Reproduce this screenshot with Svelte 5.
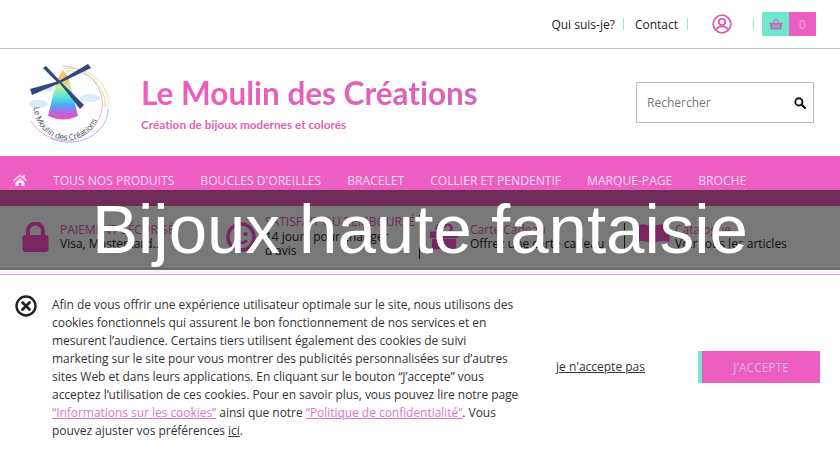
<script>
	const navItems = ["Tous nos produits", "Boucles d'oreilles", "Bracelet", "Collier et pendentif", "Marque-page", "Broche"];
</script>

<div class="page">
	<div class="topbar">
		<a class="toplink">Qui suis-je?</a>
		<span class="sep"></span>
		<a class="toplink contact">Contact</a>
		<span class="sep second"></span>
		<svg class="user" viewBox="0 0 20 20" width="20" height="20">
			<circle cx="10" cy="10" r="8.800" fill="none" stroke="#d860b0" stroke-width="1.800" />
			<circle cx="10" cy="8" r="3.200" fill="none" stroke="#d860b0" stroke-width="1.800" />
			<path d="M4.200 15.500c1.200-2.300 3.400-3.200 5.800-3.200s4.600.9 5.800 3.200" fill="none" stroke="#d860b0" stroke-width="1.800" />
		</svg>
		<span class="sep"></span>
		<div class="cart">
			<span class="basket">
				<svg viewBox="0 0 16 14" width="14" height="12">
					<path d="M0 5.500h16v1.600h-.8L14 13.500H2L.8 7.100H0z M4 5.500 7 .6l1 .6-2.600 4.300z M12 5.500 9 .6l-1 .6 2.600 4.300z" fill="#c06fb5" />
					<path d="M5 8v3.800M8 8v3.800M11 8v3.800" stroke="#6ee8cc" stroke-width="1.100" />
				</svg>
			</span>
			<span class="count">0</span>
		</div>
	</div>

	<header class="header">
		<svg class="logo" viewBox="0 0 90 84" width="90" height="84">
			<defs>
				<linearGradient id="rainbow" x1="0" y1="0" x2="0" y2="1">
					<stop offset="0" stop-color="#f7bf70" />
					<stop offset="0.22" stop-color="#b8f0a0" />
					<stop offset="0.45" stop-color="#58e4dc" />
					<stop offset="0.65" stop-color="#4aa8f4" />
					<stop offset="0.82" stop-color="#b468e4" />
					<stop offset="1" stop-color="#f052a8" />
				</linearGradient>
			</defs>
			<g fill="none" stroke-width="0.7">
				<path d="M36 3A42 38 0 0 1 44 78A42 38 0 0 1 5 58" stroke="#e88cc4" />
				<path d="M38 5.500A39 35 0 0 1 82 44" stroke="#f0c860" />
				<path d="M40 8A36 33 0 0 1 79 44" stroke="#a4e47c" />
				<path d="M82 46A39 33 0 0 1 24 75" stroke="#8098ec" />
			</g>
			<path d="M37 7 43 16H31z" fill="#f7bf70" />
			<path d="M31 16H43L52 53Q37 60 22 53z" fill="url(#rainbow)" />
			<ellipse cx="12" cy="41" rx="10" ry="4" fill="#d8ecfa" />
			<ellipse cx="64" cy="35" rx="10" ry="4" fill="#d8ecfa" />
			<ellipse cx="24" cy="26" rx="6" ry="2.500" fill="#d8ecfa" />
			<path d="M33 18 4 26 6 32 34 20z" fill="#2f4880" />
			<path d="M33 18 62 1 65 5 34 20z" fill="#2f4880" />
			<path d="M17 5 20 3 34 18 32 20z" fill="#2f4880" />
			<path d="M32 18 34 18 58 42 54 46z" fill="#2f4880" />
			<path id="arc" d="M8 44A33 33 0 0 0 73 52" fill="none" />
			<text class="logotext"><textPath href="#arc">Le Moulin des Créations</textPath></text>
		</svg>
		<div class="brand">
			<div class="name">Le Moulin des Créations</div>
			<div class="tagline">Création de bijoux modernes et colorés</div>
		</div>
		<div class="search">
			<span class="placeholder">Rechercher</span>
			<svg viewBox="0 0 14 14" width="12" height="12">
				<circle cx="5.700" cy="5.700" r="4.200" fill="none" stroke="#111" stroke-width="2.200" />
				<path d="M8.800 8.800 12.800 12.800" stroke="#111" stroke-width="2.600" stroke-linecap="round" />
			</svg>
		</div>
	</header>

	<nav class="nav">
		<svg class="home" viewBox="0 0 16 14" width="14" height="12">
			<path d="M8 .5 0 7.400l1 1.200L8 2.600l7 6 1-1.200-2.700-2.300V1.200h-2v2.200zM2.800 9.200V14h3.600v-3.500h3.200V14h3.600V9.200L8 4.600z" fill="#fbe6f5" />
		</svg>
		{#each navItems as item}
			<a class="navitem">{item}</a>
		{/each}
	</nav>

	<section class="features">
		<div class="feature first">
			<svg class="ficon" viewBox="0 0 27 30" width="27" height="30">
				<path d="M6 14V9a7.500 7.500 0 0 1 15 0v5" fill="none" stroke="#ff50d0" stroke-width="4" />
				<rect x="0.500" y="13" width="26" height="17" rx="3" fill="#ff50d0" />
			</svg>
			<div class="ftext">
				<div class="ftitle">PAIEMENT SÉCURISÉ</div>
				<div class="fsub">Visa, Mastercard..</div>
			</div>
		</div>
		<div class="feature sat">
			<svg class="ficon" viewBox="0 0 30 30" width="30" height="30">
				<circle cx="15" cy="15" r="13" fill="none" stroke="#ff50d0" stroke-width="3.500" />
				<circle cx="10.500" cy="12" r="2" fill="#ff50d0" />
				<circle cx="19.500" cy="12" r="2" fill="#ff50d0" />
				<path d="M9 18.500q6 5 12 0" fill="none" stroke="#ff50d0" stroke-width="2.500" />
			</svg>
			<div class="ftext">
				<div class="ftitle">SATISFAIT OU REMBOURSÉ</div>
				<div class="fsub">14 jours pour changer d'avis</div>
			</div>
		</div>
		<div class="feature gift">
			<svg class="ficon" viewBox="0 0 30 26" width="28" height="26">
				<path d="M9 7a4 4 0 1 1 6-4 4 4 0 1 1 6 4" fill="none" stroke="#ff50d0" stroke-width="3" />
				<rect x="0" y="7" width="30" height="7" rx="1" fill="#ff50d0" />
				<rect x="2" y="15" width="26" height="11" rx="1" fill="#ff50d0" />
			</svg>
			<div class="ftext">
				<div class="ftitle">Carte Cadeau</div>
				<div class="fsub">Offrez une carte cadeau</div>
			</div>
		</div>
		<div class="feature book">
			<svg class="ficon raised" viewBox="0 0 34 20" width="35" height="20">
				<path d="M0 2q9-4 17 1 8-5 17-1v16q-9-3-17 2-8-5-17-2z" fill="#ff50d0" />
			</svg>
			<div class="ftext">
				<div class="ftitle">Catalogue</div>
				<div class="fsub">Voir tous les articles</div>
			</div>
		</div>
	</section>

	<div class="strip"></div>

	<section class="cookies">
		<svg class="close" viewBox="0 0 22 22" width="22" height="22">
			<circle cx="11" cy="11" r="9.500" fill="none" stroke="#222" stroke-width="2.400" />
			<path d="M7.500 7.500 14.500 14.500M14.500 7.500 7.500 14.500" stroke="#222" stroke-width="2.800" stroke-linecap="round" />
		</svg>
		<p class="notice">
			Afin de vous offrir une expérience utilisateur optimale sur le site, nous utilisons des cookies fonctionnels qui assurent le bon fonctionnement de nos services et en mesurent l’audience. Certains tiers utilisent également des cookies de suivi marketing sur le site pour vous montrer des publicités personnalisées sur d’autres sites Web et dans leurs applications. En cliquant sur le bouton “J’accepte” vous acceptez l’utilisation de ces cookies. Pour en savoir plus, vous pouvez lire notre page
			<a class="pink">“Informations sur les cookies”</a> ainsi que notre <a class="pink">“Politique de confidentialité”</a>. Vous pouvez ajuster vos préférences <a class="plain">ici</a>.
		</p>
		<a class="refuse">je n'accepte pas</a>
		<button class="accept">J'ACCEPTE</button>
	</section>

	<div class="banner">Bijoux haute fantaisie</div>
</div>

<style>
	:global(body) {
		margin: 0;
		background: #fff;
	}
	.page {
		position: relative;
		width: 840px;
		height: 460px;
		overflow: hidden;
		font-family: "Open Sans", sans-serif;
		color: #222;
	}
	.topbar {
		display: flex;
		align-items: center;
		justify-content: flex-end;
		height: 48px;
		padding-right: 24px;
		border-bottom: 1px solid #c4c4c4;
		font-size: 12px;
	}
	.sep {
		width: 1px;
		height: 12px;
		background: #9ce8d6;
		margin-left: 8px;
	}
	.sep.second {
		margin-left: 9px;
	}
	.contact {
		margin-left: 11px;
	}
	.user {
		margin-left: 24px;
	}
	.topbar .user + .sep {
		margin-left: 21px;
	}
	.cart {
		display: flex;
		height: 24px;
		margin-left: 8px;
	}
	.basket {
		display: flex;
		align-items: center;
		justify-content: center;
		width: 27px;
		background: #6ee8cc;
	}
	.count {
		display: flex;
		align-items: center;
		justify-content: center;
		width: 27px;
		background: #ec5fc0;
		color: #f3a5dc;
	}
	.header {
		display: flex;
		align-items: flex-start;
		height: 107px;
	}
	.logo {
		margin: 14px 0 0 26px;
	}
	.brand {
		margin: 25px 0 0 25px;
		width: 495px;
	}
	.name {
		font-family: Lato, sans-serif;
		font-weight: 700;
		font-size: 31.500px;
		line-height: 38px;
		font-variant-ligatures: none;
		background: linear-gradient(90deg, #ef5dc0, #d065b0);
		-webkit-background-clip: text;
		background-clip: text;
		color: transparent;
	}
	.tagline {
		margin-top: 5px;
		font-family: Lato, sans-serif;
		font-weight: 700;
		font-size: 11.800px;
		font-variant-ligatures: none;
		color: #df62b6;
	}
	.logotext {
		font-family: "Open Sans", sans-serif;
		font-size: 8px;
		fill: #445;
	}
	.search {
		display: flex;
		align-items: center;
		justify-content: space-between;
		box-sizing: border-box;
		width: 178px;
		height: 41px;
		margin-top: 33px;
		padding: 0 7px 0 10px;
		border: 1px solid #bdbdbd;
	}
	.placeholder {
		font-size: 12px;
		color: #777;
	}
	.nav {
		display: flex;
		align-items: flex-start;
		gap: 26px;
		box-sizing: border-box;
		height: 50px;
		padding: 17px 0 0 13px;
		background: #ec5fc0;
	}
	.home {
		margin-top: 1px;
	}
	.navitem {
		font-size: 12.100px;
		line-height: 15px;
		text-transform: uppercase;
		color: #fbdcf2;
	}
	.features {
		display: grid;
		grid-template-columns: 204px 201px 205px 205px;
		align-items: center;
		box-sizing: border-box;
		height: 63px;
		padding-left: 15px;
		border-bottom: 1px solid #ccc;
	}
	.feature {
		display: flex;
		align-items: center;
		gap: 11px;
		box-sizing: border-box;
		padding-left: 7px;
	}
	.sat {
		gap: 9px;
		border-right: 1px solid #222;
	}
	.gift {
		padding-left: 10px;
		gap: 12px;
		border-right: 1px solid #222;
	}
	.book {
		padding-left: 10px;
		gap: 5px;
	}
	.raised {
		margin-bottom: 6px;
	}
	.ftext {
		font-size: 12px;
		line-height: 14.500px;
	}
	.sat .ftext {
		width: 152px;
	}
	.ftitle {
		color: #e65cb8;
		white-space: nowrap;
	}
	.fsub {
		color: #1c1c1c;
	}
	.strip {
		height: 5px;
		background: #fdf2fb;
		border-bottom: 1px solid #cfa3c4;
	}
	.cookies {
		position: relative;
		display: flex;
		align-items: flex-start;
		padding: 21px 20px 0 15px;
	}
	.close {
		flex: none;
		margin-top: -1px;
	}
	.notice {
		flex: none;
		width: 472px;
		margin: 0 0 0 15px;
		font-size: 12px;
		line-height: 18px;
		letter-spacing: -0.040px;
		color: #333;
	}
	.pink {
		color: #d878c4;
		text-decoration: underline;
	}
	.plain {
		text-decoration: underline;
	}
	.refuse {
		margin: 62px 0 0 32px;
		font-size: 12px;
		line-height: 18px;
		color: #333;
		text-decoration: underline;
	}
	.accept {
		box-sizing: border-box;
		width: 122px;
		height: 32px;
		margin: 55px 0 0 auto;
		border: 0;
		border-left: 4px solid #7ce6cc;
		background: #ec5fc0;
		color: #dcaee2;
		font-family: "Open Sans", sans-serif;
		font-size: 12px;
	}
	.banner {
		position: absolute;
		top: 190px;
		left: 0;
		right: 0;
		height: 80px;
		background: rgba(0, 0, 0, 0.53);
		color: #fff;
		font-family: "Liberation Sans", Arial, sans-serif;
		font-size: 69px;
		line-height: 80px;
		text-align: center;
		white-space: nowrap;
	}
</style>
